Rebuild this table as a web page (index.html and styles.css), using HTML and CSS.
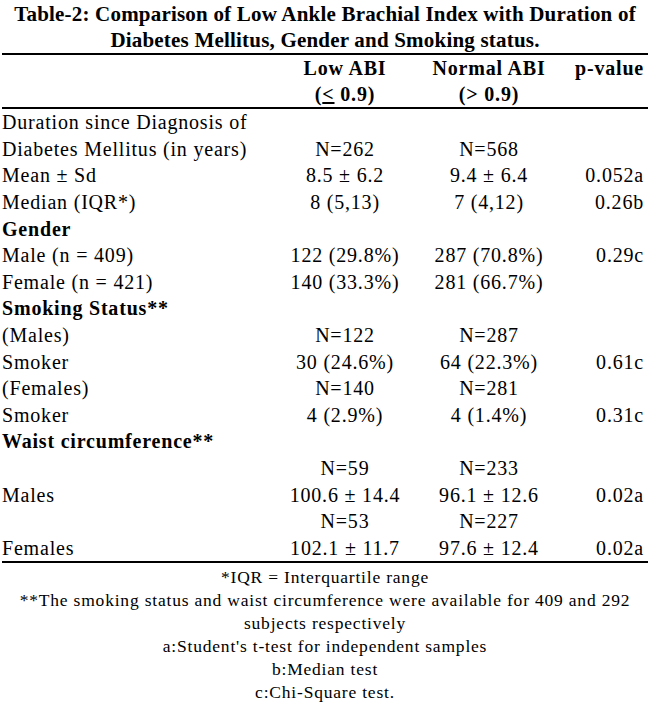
FILE: index.html
```html
<!DOCTYPE html>
<html lang="en">
<head>
<meta charset="utf-8">
<title>Table-2</title>
<link rel="stylesheet" href="styles.css">
</head>
<body>
<div class="page">
  <h1 class="title">Table-2: Comparison of Low Ankle Brachial Index with Duration of<br>Diabetes Mellitus, Gender and Smoking status.</h1>
  <div class="tbl">
    <div class="head">
      <div class="row"><span></span><span class="c">Low ABI</span><span class="c">Normal ABI</span><span class="p">p-value</span></div>
      <div class="row"><span></span><span class="c">(<u>&lt;</u> 0.9)</span><span class="c">(&gt; 0.9)</span><span class="p"></span></div>
    </div>
    <div class="body">
      <div class="row"><span>Duration since Diagnosis of</span><span class="c"></span><span class="c"></span><span class="p"></span></div>
      <div class="row"><span>Diabetes Mellitus (in years)</span><span class="c">N=262</span><span class="c">N=568</span><span class="p"></span></div>
      <div class="row"><span>Mean ± Sd</span><span class="c">8.5 ± 6.2</span><span class="c">9.4 ± 6.4</span><span class="p">0.052a</span></div>
      <div class="row"><span>Median (IQR*)</span><span class="c">8 (5,13)</span><span class="c">7 (4,12)</span><span class="p">0.26b</span></div>
      <div class="row"><span class="b">Gender</span><span class="c"></span><span class="c"></span><span class="p"></span></div>
      <div class="row"><span>Male (n = 409)</span><span class="c">122 (29.8%)</span><span class="c">287 (70.8%)</span><span class="p">0.29c</span></div>
      <div class="row"><span>Female (n = 421)</span><span class="c">140 (33.3%)</span><span class="c">281 (66.7%)</span><span class="p"></span></div>
      <div class="row"><span class="b">Smoking Status**</span><span class="c"></span><span class="c"></span><span class="p"></span></div>
      <div class="row"><span>(Males)</span><span class="c">N=122</span><span class="c">N=287</span><span class="p"></span></div>
      <div class="row"><span>Smoker</span><span class="c">30 (24.6%)</span><span class="c">64 (22.3%)</span><span class="p">0.61c</span></div>
      <div class="row"><span>(Females)</span><span class="c">N=140</span><span class="c">N=281</span><span class="p"></span></div>
      <div class="row"><span>Smoker</span><span class="c">4 (2.9%)</span><span class="c">4 (1.4%)</span><span class="p">0.31c</span></div>
      <div class="row"><span class="b">Waist circumference**</span><span class="c"></span><span class="c"></span><span class="p"></span></div>
      <div class="row"><span></span><span class="c">N=59</span><span class="c">N=233</span><span class="p"></span></div>
      <div class="row"><span>Males</span><span class="c">100.6 ± 14.4</span><span class="c">96.1 ± 12.6</span><span class="p">0.02a</span></div>
      <div class="row"><span></span><span class="c">N=53</span><span class="c">N=227</span><span class="p"></span></div>
      <div class="row"><span>Females</span><span class="c">102.1 ± 11.7</span><span class="c">97.6 ± 12.4</span><span class="p">0.02a</span></div>
    </div>
  </div>
  <div class="notes">
    <p>*IQR = Interquartile range</p>
    <p>**The smoking status and waist circumference were available for 409 and 292<br>subjects respectively</p>
    <p>a:Student's t-test for independent samples</p>
    <p>b:Median test</p>
    <p>c:Chi-Square test.</p>
  </div>
</div>
</body>
</html>
```
FILE: styles.css
```css
body {
  margin: 0;
  background: #fff;
  color: #000;
  font-family: "Liberation Serif", "Times New Roman", serif;
}
.page {
  width: 650px;
}
.title {
  margin: 0;
  padding-top: 1px;
  font-size: 21px;
  font-weight: bold;
  letter-spacing: 0.2px;
  line-height: 26px;
  text-align: center;
}
.tbl {
  margin-left: 2px;
  width: 646px;
  border-top: 2px solid #000;
  font-size: 20px;
  letter-spacing: 0.8px;
}
.head {
  border-bottom: 2px solid #000;
  font-weight: bold;
}
.head .row {
  height: 26px;
}
.body {
  border-bottom: 2px solid #000;
}
.row {
  display: grid;
  grid-template-columns: 274px 138px 150px 84px;
  height: 26.6px;
  line-height: 26px;
  align-items: center;
  white-space: nowrap;
}
.c {
  text-align: center;
}
.p {
  text-align: right;
  padding-right: 4px;
}
.b {
  font-weight: bold;
}
.notes {
  padding-top: 3px;
  font-size: 17.5px;
  letter-spacing: 0.8px;
  line-height: 23px;
  text-align: center;
}
.notes p {
  margin: 0;
}
```
